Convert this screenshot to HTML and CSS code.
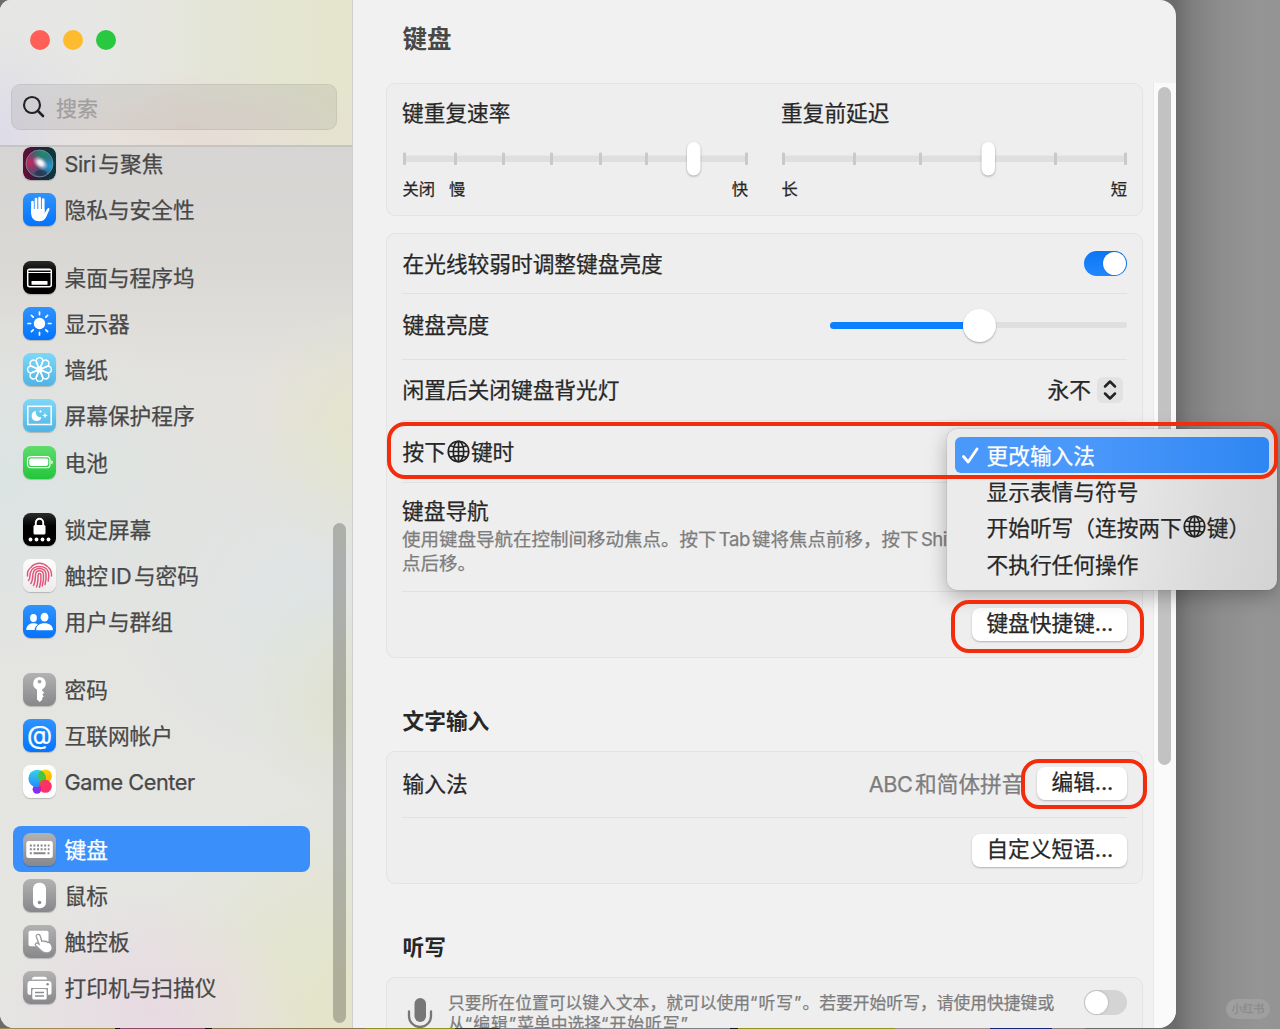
FILE: index.html
```
<!DOCTYPE html>
<html lang="zh-CN">
<head>
    <meta charset="utf-8">
    <title>键盘</title>
    <link rel="stylesheet" href="styles.css">
</head>
<body>
<div class="screen">
    <div class="window">
        <div class="sidebar">
            <div class="sidebar-top">
                <div class="lights">
                    <span class="light red"></span>
                    <span class="light yellow"></span>
                    <span class="light green"></span>
                </div>
                <div class="search">
                    <svg width="24" height="24" viewBox="0 0 24 24" fill="none" stroke="#222" stroke-width="2.1" stroke-linecap="round"><circle cx="10" cy="10" r="8"/><path d="M16 16l5 5" stroke-width="2.6"/></svg>
                    <span>搜索</span>
                </div>
            </div>

            <div class="list">
                <div class="group">
                    <div class="item">
                        <svg class="icon" viewBox="0 0 33 33">
                            <defs>
                                <linearGradient id="siriBg" x1="0" x2="1"><stop offset="0" stop-color="#6d0b35"/><stop offset=".45" stop-color="#26203c"/><stop offset="1" stop-color="#073c3e"/></linearGradient>
                                <radialGradient id="siriPink" cx=".15" cy=".45" r=".5"><stop offset="0" stop-color="#c8285f"/><stop offset="1" stop-color="#c8285f" stop-opacity="0"/></radialGradient>
                                <radialGradient id="siriGreen" cx=".65" cy=".1" r=".5"><stop offset="0" stop-color="#1f8f6c"/><stop offset="1" stop-color="#1f8f6c" stop-opacity="0"/></radialGradient>
                                <radialGradient id="siriCyan" cx=".9" cy=".6" r=".45"><stop offset="0" stop-color="#1e9bd8"/><stop offset="1" stop-color="#1e9bd8" stop-opacity="0"/></radialGradient>
                                <radialGradient id="siriGlow"><stop offset="0" stop-color="#fff"/><stop offset=".35" stop-color="#fff" stop-opacity=".85"/><stop offset="1" stop-color="#cbb9e8" stop-opacity="0"/></radialGradient>
                            </defs>
                            <rect width="33" height="33" rx="7.5" fill="url(#siriBg)"/>
                            <circle cx="16.5" cy="16.5" r="13.5" fill="#3c5070"/>
                            <circle cx="16.5" cy="16.5" r="13.5" fill="url(#siriPink)"/>
                            <circle cx="16.5" cy="16.5" r="13.5" fill="url(#siriGreen)"/>
                            <circle cx="16.5" cy="16.5" r="13.5" fill="url(#siriCyan)"/>
                            <ellipse cx="18" cy="26" rx="6" ry="3" fill="#132438" opacity=".5"/>
                            <ellipse cx="17.5" cy="16" rx="9" ry="6" fill="url(#siriGlow)" transform="rotate(38 17.5 16)"/>
                            <circle cx="16.5" cy="16.5" r="13.5" fill="none" stroke="#8fa5a9" stroke-width=".8" opacity=".8"/>
                        </svg>
                        <span><span class="latin">Siri</span>与聚焦</span>
                    </div>
                    <div class="item">
                        <svg class="icon blue" viewBox="0 0 33 33">
                            <path d="M9.5 9v11M13 6v12M16.6 5v12M20.2 6.5V18" stroke="#fff" stroke-width="2.7" stroke-linecap="round" fill="none"/>
                            <path d="M8.200 16h13.400v4.200l2.700-4.400c.9-1.300 2.600-.6 2.100 1L23.200 24c-1.200 2.800-3.700 4.200-7 4.200-5 0-8-3.200-8-8z" fill="#fff"/>
                        </svg>
                        <span>隐私与安全性</span>
                    </div>
                </div>

                <div class="group">
                    <div class="item">
                        <svg class="icon black" viewBox="0 0 33 33">
                            <rect x="4.700" y="8.200" width="23.600" height="17.600" rx="2" fill="none" stroke="#fff" stroke-width="1.500"/>
                            <path d="M5.500 9.500h22" stroke="#888" stroke-width="1"/><path d="M5 11.500h23" stroke="#fff" stroke-width="1.100"/>
                            <rect x="8.500" y="20" width="16" height="3.800" rx=".5" fill="#fff"/>
                        </svg>
                        <span>桌面与程序坞</span>
                    </div>
                    <div class="item">
                        <svg class="icon blue" viewBox="0 0 33 33">
                            <circle cx="16.500" cy="16.500" r="5.700" fill="#fff"/>
                            <path d="M16.500 5v2.600M16.500 25.400V28M5 16.500h2.600M25.400 16.500H28M8.400 8.400l1.800 1.800M22.800 22.800l1.800 1.800M8.400 24.600l1.800-1.800M22.800 10.200l1.800-1.800" stroke="#fff" stroke-width="1.700" stroke-linecap="round"/>
                        </svg>
                        <span>显示器</span>
                    </div>
                    <div class="item">
                        <svg class="icon sky" viewBox="0 0 33 33">
                            <g fill="none" stroke="#fff" stroke-width="1.400">
                                <g id="petals">
                                    <path id="petal" d="M16.500 16.500L13.300 9.500A3.500 3.500 0 1 1 19.700 9.500z"/>
                                    <use href="#petal" transform="rotate(90 16.500 16.500)"/>
                                    <use href="#petal" transform="rotate(180 16.500 16.500)"/>
                                    <use href="#petal" transform="rotate(270 16.500 16.500)"/>
                                </g>
                                <use href="#petals" transform="rotate(45 16.500 16.500)"/>
                                <circle cx="16.500" cy="16.500" r="2.500"/>
                            </g>
                        </svg>
                        <span>墙纸</span>
                    </div>
                    <div class="item">
                        <svg class="icon sky" viewBox="0 0 33 33">
                            <rect x="4.800" y="7.300" width="23.400" height="18.200" fill="none" stroke="#fff" stroke-width="1.500"/>
                            <path d="M13 12a5 5 0 1 0 5.500 6.200A4.800 4.800 0 0 1 13 12z" fill="#fff"/>
                            <path d="M22 13.500l.8 2.200 2.200.8-2.200.8-.8 2.200-.8-2.200-2.200-.8 2.200-.8zM17.500 10.500l.5 1.400 1.400.5-1.400.5-.5 1.400-.5-1.400-1.400-.5 1.400-.5z" fill="#fff"/>
                        </svg>
                        <span>屏幕保护程序</span>
                    </div>
                    <div class="item">
                        <svg class="icon lime" viewBox="0 0 33 33">
                            <rect x="4.500" y="10.700" width="22.500" height="11" rx="3.300" fill="none" stroke="#fff" stroke-width="1.200"/>
                            <rect x="6.300" y="12.500" width="18.900" height="7.400" rx="1.800" fill="#fff"/>
                            <path d="M28.300 14.300c2 .8 2 3.200 0 4z" fill="#fff"/>
                        </svg>
                        <span>电池</span>
                    </div>
                </div>

                <div class="group">
                    <div class="item">
                        <svg class="icon black" viewBox="0 0 33 33">
                            <rect x="10.500" y="12" width="12" height="9.500" rx="1.500" fill="#fff"/>
                            <path d="M12.800 13V9.500a3.700 3.700 0 0 1 7.400 0V13" fill="none" stroke="#fff" stroke-width="1.900"/>
                            <g fill="#fff"><circle cx="7.500" cy="26.500" r="1.900"/><circle cx="13.500" cy="26.500" r="1.900"/><circle cx="19.500" cy="26.500" r="1.900"/><circle cx="25.500" cy="26.500" r="1.900"/></g>
                        </svg>
                        <span>锁定屏幕</span>
                    </div>
                    <div class="item">
                        <svg class="icon paper" viewBox="0 0 33 33">
                            <g fill="none" stroke="#e0577b" stroke-width="1.500" stroke-linecap="round">
                                <path d="M8.500 7.500C13 3 20 3 24.500 7.500"/>
                                <path d="M4.500 17c-.5-4 1-7 4-9M28.500 17c.3-4-1.200-6.800-3-8.500"/>
                                <path d="M5.500 21.500c2-2 1-5 2-8C10 5.500 23 5.500 25.500 13.500c.6 2.500.4 5-.3 8.500"/>
                                <path d="M7.800 24.500c2-2.500 1.700-6 2.200-9.500 1-7.500 12-7.500 13 0 .4 4 0 7-1 10.500"/>
                                <path d="M10.500 26.500c2-3.500 1.700-7 2-11 .7-5 7.300-5 8 0 .4 4-.1 7.700-1.300 11.500"/>
                                <path d="M13.500 28c1.500-3.500 1.500-7.500 1.600-11.700.3-2.300 2.600-2.300 2.900 0 .2 4.200-.1 7.700-1.500 12"/>
                            </g>
                        </svg>
                        <span>触控<span class="latin">ID</span>与密码</span>
                    </div>
                    <div class="item">
                        <svg class="icon blue" viewBox="0 0 33 33">
                            <g fill="#fff">
                                <ellipse cx="10.500" cy="13" rx="3.400" ry="3.900"/>
                                <path d="M3.300 25c0-4.200 3-6.700 7.200-6.700 1.800 0 3.200.4 4.300 1.200-2 1.500-3 3.300-3.200 5.500z"/>
                                <ellipse cx="21.500" cy="12.200" rx="3.900" ry="4.400"/>
                                <path d="M13.200 25.300c-.4-4.700 3.500-7 8.300-7s8.700 2.300 8.300 7z"/>
                            </g>
                        </svg>
                        <span>用户与群组</span>
                    </div>
                </div>

                <div class="group">
                    <div class="item">
                        <svg class="icon gray" viewBox="0 0 33 33">
                            <path fill="#fff" fill-rule="evenodd" d="M16.500 4a6.500 6.500 0 0 1 2.700 12.300v1.500l2 1.900-1.900 1.900 1.500 1.800-1.600 1.700v1.700L16.700 29 14 26.500V16.400A6.500 6.500 0 0 1 16.500 4zm0 2.700a1.900 1.900 0 1 0 0 3.800 1.900 1.900 0 0 0 0-3.800z"/>
                        </svg>
                        <span>密码</span>
                    </div>
                    <div class="item">
                        <span class="icon blue at">@</span>
                        <span>互联网帐户</span>
                    </div>
                    <div class="item">
                        <svg class="icon white" viewBox="0 0 33 33">
                            <defs>
                                <linearGradient id="gcBlue" x1="0" y1="0" x2="0" y2="1"><stop offset="0" stop-color="#34d4e8"/><stop offset="1" stop-color="#2b86ff"/></linearGradient>
                                <linearGradient id="gcWarm" x1="0" y1="0" x2="1" y2="1"><stop offset="0" stop-color="#ffe000"/><stop offset="1" stop-color="#ffa800"/></linearGradient>
                            </defs>
                            <circle cx="22.300" cy="11" r="6.600" fill="url(#gcWarm)"/>
                            <circle cx="14" cy="24.300" r="4.400" fill="#8b2cf5"/>
                            <circle cx="14.200" cy="13.500" r="8.800" fill="url(#gcBlue)"/>
                            <path d="M22.800 15.400a8.800 8.800 0 0 0-4.700-9.800 6.600 6.600 0 0 0 4.700 12z" fill="#4bc43c"/>
                            <circle cx="22.300" cy="21.300" r="6.500" fill="#ff2f68"/>
                            <path d="M16 19.500a6.500 6.500 0 0 1 5.800-4.700c-.6 3-2.600 5.400-5.800 6.800z" fill="#d1563f"/>
                            <path d="M16 20.500c-.2 2 .5 4 2 5.600a4.400 4.400 0 0 0-2-5.600z" fill="#cb1fa8"/>
                        </svg>
                        <span class="latin">Game Center</span>
                    </div>
                </div>

                <div class="group">
                    <div class="item selected">
                        <svg class="icon gray" viewBox="0 0 33 33">
                            <rect x="3.300" y="8" width="26.500" height="17" rx="2.500" fill="#fff"/>
                            <g stroke="#888" stroke-width="2" stroke-dasharray="2 1.600"><path d="M6.800 12.500H26.500M6.800 16.300H26.500"/></g>
                            <path d="M6.800 20.200h2M10.500 20.200h12M24.500 20.200h2" stroke="#888" stroke-width="2"/>
                        </svg>
                        <span>键盘</span>
                    </div>
                    <div class="item">
                        <svg class="icon gray" viewBox="0 0 33 33">
                            <rect x="10" y="3.800" width="13" height="25.500" rx="5.800" fill="#fff"/>
                            <circle cx="16.500" cy="23.500" r="1.800" fill="#8d8d91"/>
                        </svg>
                        <span>鼠标</span>
                    </div>
                    <div class="item">
                        <svg class="icon gray" viewBox="0 0 33 33">
                            <rect x="5.500" y="5.800" width="20" height="15.500" rx="1.800" fill="#fff"/>
                            <path d="M14.300 9.500c1.500-.5 2.600.2 3 1.700l1.500 5c1-.7 2.300-.4 2.800.4 1-.5 2.300-.2 2.800.8 2-.6 3.600.8 4.400 3.300.9 3.300.6 5.500-2.600 6.600-3.700 1.300-6.500.4-8.800-2.300l-4.700-4.600c-1.300-1.500.6-3.200 2.300-2l1 .6-2.700-7.300c-.3-1 .1-1.900 1-2.200z" fill="#fff" stroke="#9a9a9d" stroke-width="1.300"/>
                        </svg>
                        <span>触控板</span>
                    </div>
                    <div class="item">
                        <svg class="icon gray" viewBox="0 0 33 33">
                            <path d="M9 8.500c0-1.700 1-2.700 2.700-2.700h9.600c1.700 0 2.700 1 2.700 2.700z" fill="#fff"/>
                            <path d="M7.500 10h18c2 0 3 1 3 3v8.500c0 1.500-.8 2.300-2.300 2.300H25V17H8v6.800H6.800c-1.500 0-2.300-.8-2.300-2.300V13c0-2 1-3 3-3z" fill="#fff"/>
                            <circle cx="24.600" cy="13.300" r="1.200" fill="#8d8d91"/>
                            <rect x="9.300" y="18" width="14.400" height="10.500" rx="1.500" fill="#fff"/>
                            <path d="M12 21.500h9M12 25h9" stroke="#8d8d91" stroke-width="1.300"/>
                        </svg>
                        <span>打印机与扫描仪</span>
                    </div>
                </div>
            </div>
            <div class="side-thumb"></div>
        </div>

        <div class="main">
            <h1>键盘</h1>

            <div class="content">
                <div class="panel rates">
                    <div class="rate">
                        <p>键重复速率</p>
                        <svg width="345" height="38" viewBox="0 0 345 38">
                            <rect x="1" y="15.500" width="343" height="6.500" fill="#dfdfdf"/>
                            <g fill="#c9c9c9">
                                <rect x="0" y="12.500" width="3" height="12.500" rx="1"/>
                                <rect x="51" y="12.500" width="3" height="12.500" rx="1"/>
                                <rect x="99" y="12.500" width="3" height="12.500" rx="1"/>
                                <rect x="147" y="12.500" width="3" height="12.500" rx="1"/>
                                <rect x="196" y="12.500" width="3" height="12.500" rx="1"/>
                                <rect x="242" y="12.500" width="3" height="12.500" rx="1"/>
                                <rect x="342" y="12.500" width="3" height="12.500" rx="1"/>
                            </g>
                            <rect class="knob" x="284" y="2" width="13.500" height="33.500" rx="6.700"/>
                        </svg>
                        <div class="labels"><span class="off">关闭</span><span>慢</span><span class="last">快</span></div>
                    </div>
                    <div class="rate">
                        <p>重复前延迟</p>
                        <svg width="345" height="38" viewBox="0 0 345 38">
                            <rect x="1" y="15.500" width="343" height="6.500" fill="#dfdfdf"/>
                            <g fill="#c9c9c9">
                                <rect x="0" y="12.500" width="3" height="12.500" rx="1"/>
                                <rect x="71" y="12.500" width="3" height="12.500" rx="1"/>
                                <rect x="137" y="12.500" width="3" height="12.500" rx="1"/>
                                <rect x="272" y="12.500" width="3" height="12.500" rx="1"/>
                                <rect x="342" y="12.500" width="3" height="12.500" rx="1"/>
                            </g>
                            <rect class="knob" x="199.500" y="2" width="13.500" height="33.500" rx="6.700"/>
                        </svg>
                        <div class="labels"><span>长</span><span class="last">短</span></div>
                    </div>
                </div>

                <div class="panel">
                    <div class="row auto">
                        <span>在光线较弱时调整键盘亮度</span>
                        <span class="switch on"></span>
                    </div>
                    <div class="row bright">
                        <span>键盘亮度</span>
                        <div class="slider"><div class="fill"></div><div class="ball"></div></div>
                    </div>
                    <div class="row idle">
                        <span>闲置后关闭键盘背光灯</span>
                        <div class="select">
                            <span>永不</span>
                            <svg width="26" height="26" viewBox="0 0 26 26"><rect width="26" height="26" rx="6" fill="#e2e2e2"/><path d="M8 9.500l5-5 5 5M8 16.500l5 5 5-5" fill="none" stroke="#222" stroke-width="2.500" stroke-linecap="round" stroke-linejoin="round"/></svg>
                        </div>
                    </div>
                    <div class="row press">
                        <span>按下<svg class="globe" viewBox="0 0 22 22"><circle cx="11" cy="11" r="9.800"/><ellipse cx="11" cy="11" rx="5" ry="9.800"/><path d="M11 1v20M1 11h20M3 5.500c5 2 11 2 16 0M3 16.500c5-2 11-2 16 0"/></svg>键时</span>
                    </div>
                    <div class="row nav">
                        <p>键盘导航</p>
                        <p class="desc">使用键盘导航在控制间移动焦点。按下<span class="latin">Tab</span>键将焦点前移，按下<span class="latin">Shift Tab</span>键将焦<br>点后移。</p>
                    </div>
                    <div class="row shortcuts">
                        <button>键盘快捷键<span class="dots">...</span></button>
                    </div>
                </div>

                <h2>文字输入</h2>
                <div class="panel">
                    <div class="row method">
                        <span>输入法</span>
                        <span class="value"><span class="latin">ABC</span>和简体拼音</span>
                        <button>编辑<span class="dots">...</span></button>
                    </div>
                    <div class="row phrases">
                        <button>自定义短语<span class="dots">...</span></button>
                    </div>
                </div>

                <h2>听写</h2>
                <div class="panel dictation">
                    <svg width="26" height="44" viewBox="0 0 26 44"><rect x="7.500" y="1" width="11.500" height="24" rx="5.700" fill="#777"/><path d="M2 14.500v4.500a11 11 0 0 0 22 0v-4.500M13 30v6" fill="none" stroke="#777" stroke-width="2.300" stroke-linecap="round"/></svg>
                    <p>只要所在位置可以键入文本，就可以使用<span class="quote">“听写”</span>。若要开始听写，请使用快捷键或<br>从<span class="quote">“编辑”</span>菜单中选择<span class="quote">“开始听写”</span></p>
                    <span class="switch"></span>
                </div>
            </div>
        </div>
        <div class="scroll"><div class="thumb"></div></div>
    </div>

    <div class="menu">
        <div class="option active"><svg width="17" height="17" viewBox="0 0 17 17"><path d="M1.500 9.500l4.700 5.500L15 2" fill="none" stroke="#fff" stroke-width="2.800" stroke-linecap="round" stroke-linejoin="round"/></svg>更改输入法</div>
        <div class="option">显示表情与符号</div>
        <div class="option">开始听写（连按两下<svg class="globe" viewBox="0 0 22 22"><circle cx="11" cy="11" r="9.800"/><ellipse cx="11" cy="11" rx="5" ry="9.800"/><path d="M11 1v20M1 11h20M3 5.500c5 2 11 2 16 0M3 16.500c5-2 11-2 16 0"/></svg>键）</div>
        <div class="option">不执行任何操作</div>
    </div>

    <div class="mark mark-press"></div>
    <div class="mark mark-shortcuts"></div>
    <div class="mark mark-edit"></div>
    <div class="watermark">小红书</div>
</div>
</body>
</html>
```

FILE: styles.css
```
*{
    margin: 0;
    padding: 0;
    box-sizing: border-box;
}
body{
    font-family: Inter, "Noto Sans CJK SC", sans-serif;
    font-size: 21.7px;
    color: #272727;
    text-autospace: normal;
    -webkit-text-stroke: .25px;
}
.screen{
    position: relative;
    width: 1280px;
    height: 1029px;
    overflow: hidden;
    background:
        linear-gradient(90deg, #a08d55 0 115px, #111 115px 120px, #8c4a68 120px 205px, #111 205px 212px, #8a7650 212px 365px, #8e9320 365px 455px, #3a3320 455px 500px, #85808a 500px 730px, #151515 730px 738px, #8e9320 738px 895px, #9f8f8c 895px 990px, #16267c 990px 1052px, #8b8383 1052px 1085px, transparent 1085px) 0 1028px / 1280px 1px no-repeat,
        linear-gradient(90deg, #6c6c6c 1176px, #7f7f7f 1192px, #8d8d8d 1220px, #959595 1260px, #939393);
}
.window{
    display: flex;
    width: 1176px;
    height: 1028px;
    border-radius: 11px 16px 18px 14px;
    overflow: hidden;
    background: #f1f1f1;
}

/* sidebar */
.sidebar{
    position: relative;
    width: 353px;
    border-right: 1px solid #cfcfcb;
    color: #484848;
    background:
        radial-gradient(circle at 370px 430px, #e3e4cb 0, transparent 130px),
        radial-gradient(circle at 350px 700px, #dfe2ce 0, transparent 110px),
        radial-gradient(ellipse 150px 120px at 150px 1010px, #e8dae2 0, transparent 100%),
        radial-gradient(circle at 350px 1010px, #e3e4c9 30px, transparent 220px),
        radial-gradient(ellipse 240px 180px at 0 480px, #dbe4e3 0, transparent 100%),
        radial-gradient(circle at 290px 600px, #dfe4e4 0, transparent 170px),
        linear-gradient(#d6d5d3 146px, #dad8d5 260px, #e3e1dd 370px, #e4e4e1 620px, #e5e5e2 1028px);
}
.sidebar-top{
    height: 147px;
    padding: 30px 15px 0 11px;
    border-bottom: 2px solid #c6c4c0;
    background:
        radial-gradient(ellipse 190px 60px at 190px 130px, #e7dcd6 0, transparent 100%),
        radial-gradient(circle at 0 140px, #dddbe8 0, transparent 110px),
        linear-gradient(90deg, #e6e6e4 100px, #e4e5d7 220px, #e5e5ce 330px);
}
.lights{
    display: flex;
    gap: 13px;
    padding-left: 18.5px;
}
.light{
    width: 20px;
    height: 20px;
    border-radius: 50%;
}
.red{
    background: #ff5f57;
}
.yellow{
    background: #febb2e;
}
.green{
    background: #28c840;
}
.search{
    display: flex;
    align-items: center;
    gap: 11px;
    width: 326px;
    height: 46px;
    margin-top: 34px;
    padding-left: 10px;
    border: 1px solid rgba(0,0,0,.06);
    border-radius: 9px;
    background: rgba(0,0,0,.07);
    font-size: 21px;
    color: #a09e9e;
}
.search span{
    margin-left: -1px;
}
.list{
    margin-top: -6.5px;
    padding-left: 13px;
    position: relative;
}
.group{
    margin-bottom: 21.3px;
}
.item{
    display: flex;
    align-items: center;
    gap: 8.5px;
    width: 297px;
    height: 46.2px;
    padding-left: 10px;
    border-radius: 8px;
    white-space: nowrap;
}
.item > span:last-child{
    padding-bottom: 2px;
}
.item > .latin:last-child{
    padding-bottom: 0;
}
.latin{
    letter-spacing: -.45px;
}
.selected{
    background: #3a8ffb;
    color: #fff;
}
.icon{
    flex: none;
    width: 33px;
    height: 33px;
    border-radius: 7.5px;
    box-shadow: 0 1px 1px rgba(0,0,0,.2);
}
.blue{
    background: linear-gradient(#2f93ff, #0474fb);
}
.black{
    background: linear-gradient(#2b2b2b, #000 40%);
}
.sky{
    background: linear-gradient(#7dd8f8, #4fb4e6);
}
.lime{
    background: linear-gradient(#5fdc6b, #22c63b);
}
.paper{
    background: linear-gradient(#fdfdfd, #ececec);
}
.gray{
    background: linear-gradient(#b2b2b3, #88888c);
}
.white{
    background: #fff;
}
.at{
    color: #fff;
    font-size: 26px;
    line-height: 31px;
    text-align: center;
}
.side-thumb{
    position: absolute;
    right: 6px;
    top: 523px;
    width: 13px;
    height: 500px;
    border-radius: 7px;
    background: rgba(0,0,0,.23);
}

/* right side */
.main{
    width: 800px;
}
h1{
    height: 83px;
    padding-left: 49.5px;
    font-size: 24.5px;
    line-height: 79px;
    color: #484848;
    -webkit-text-stroke: 0;
}
.content{
    padding: 0 10px 0 33px;
}
.panel{
    padding: 0 15px;
    border: 1px solid #e3e3e3;
    border-radius: 9px;
    background: #eee;
}
.rates{
    display: flex;
    gap: 33px;
    height: 133px;
    margin-bottom: 17px;
    padding: 13px 15px 0;
}
.rate{
    width: 346px;
}
.rate p{
    line-height: 32px;
}
.rate svg{
    display: block;
    margin: 11px 0 0 1px;
}
.knob{
    fill: #fff;
    filter: drop-shadow(0 1px 1px rgba(0,0,0,.3));
}
.labels{
    display: flex;
    margin-top: -1px;
    padding-left: .5px;
    font-size: 16.3px;
    line-height: 24px;
}
.off{
    margin-right: 14px;
}
.last{
    margin-left: auto;
}
.row{
    display: flex;
    align-items: center;
    justify-content: space-between;
    border-bottom: 1px solid #e1e1e1;
}
.row > span:first-child{
    padding: 0 0 3px .5px;
}
.row:last-child{
    border-bottom: 0;
}
.auto{
    height: 60px;
}
.bright{
    height: 66px;
    padding-bottom: 3px;
}
.idle{
    height: 61px;
}
.press{
    height: 62px;
}
.nav{
    display: block;
    height: 109px;
    padding-top: 12px;
    line-height: 32px;
    white-space: nowrap;
    overflow: hidden;
}
.desc{
    font-size: 18.5px;
    line-height: 24px;
    color: #7d7d7d;
}
.shortcuts{
    height: 65px;
    justify-content: flex-end;
}
.switch{
    flex: none;
    display: flex;
    width: 43px;
    height: 25px;
    padding: 1px;
    border-radius: 13px;
    background: #d4d4d4;
}
.switch::after{
    content: "";
    width: 23px;
    height: 23px;
    border-radius: 50%;
    background: #fff;
    box-shadow: 0 0 2px rgba(0,0,0,.3);
}
.on{
    justify-content: flex-end;
    background: linear-gradient(#0a76f5, #2388ff);
}
.slider{
    display: flex;
    align-items: center;
    width: 297px;
    height: 6px;
    border-radius: 3px;
    background: #dfdfdf;
}
.fill{
    width: 133px;
    height: 7px;
    border-radius: 4px 0 0 4px;
    background: #0a7fff;
}
.ball{
    width: 33px;
    height: 33px;
    border-radius: 50%;
    background: #fff;
    box-shadow: 0 1px 2px rgba(0,0,0,.3);
}
.select{
    display: flex;
    align-items: center;
    gap: 6px;
    margin-right: 4px;
}
.select span{
    padding-bottom: 3px;
}
.globe{
    width: 23px;
    height: 23px;
    margin: 0 1px;
    vertical-align: -3px;
    fill: none;
    stroke: #222;
    stroke-width: 1.6;
}
button{
    height: 33px;
    padding: 0 14px 3px;
    border: 0;
    border-radius: 8px;
    background: #fff;
    box-shadow: 0 1px 2px rgba(0,0,0,.25);
    font: inherit;
    line-height: 30px;
    color: #272727;
    text-autospace: no-autospace;
    -webkit-text-stroke: .25px;
}
.dots{
    letter-spacing: -.2px;
}
h2{
    height: 93px;
    padding: 47px 0 0 16.5px;
    font-size: 21.7px;
    line-height: 32px;
    -webkit-text-stroke: 0;
}
.method{
    height: 66px;
    padding-bottom: 2px;
}
.value{
    margin-left: auto;
    margin-right: 14px;
    padding-bottom: 2px;
    color: #7d7d7d;
}
.phrases{
    height: 65px;
    justify-content: flex-end;
}
.dictation{
    display: flex;
    align-items: flex-start;
    height: 90px;
    padding: 12px 15px 0 20px;
}
.dictation svg{
    flex: none;
    margin-top: 7px;
}
.dictation p{
    width: 612px;
    margin: 3px 24px 0 15px;
    font-size: 16.8px;
    line-height: 21px;
    white-space: nowrap;
    color: #7d7d7d;
}
.quote{
    letter-spacing: 1px;
}
.scroll{
    width: 23px;
    margin-top: 83px;
    padding: 4px 0 0 4px;
    border-left: 1px solid #e9e9e9;
    background: #fafafa;
}
.thumb{
    width: 13px;
    height: 678px;
    border-radius: 7px;
    background: #c2c2c2;
}

/* popup menu */
.menu{
    position: absolute;
    left: 947px;
    top: 429px;
    width: 330px;
    height: 161px;
    padding: 8px;
    border-radius: 10px;
    background: linear-gradient(100deg, #ebebeb 45%, #dadada 80%, #d3d3d3);
    box-shadow: 0 0 1px rgba(0,0,0,.5), 0 6px 20px rgba(0,0,0,.28);
}
.option{
    display: flex;
    align-items: center;
    height: 36.4px;
    padding: 0 0 2px 31.5px;
    border-radius: 6px;
    white-space: nowrap;
}
.active{
    padding-left: 7px;
    background: linear-gradient(90deg, #4b98fb 40%, #2f86f2);
    color: #fff;
}
.active svg{
    margin-right: 7.5px;
    margin-top: 2px;
}

/* red outlines */
.mark{
    position: absolute;
    border: 4px solid #f22d0d;
    border-radius: 18px;
}
.mark-press{
    left: 387px;
    top: 422px;
    width: 891px;
    height: 57px;
}
.mark-shortcuts{
    left: 951px;
    top: 600px;
    width: 193px;
    height: 53px;
}
.mark-edit{
    left: 1021px;
    top: 759px;
    width: 126px;
    height: 50px;
}
.watermark{
    position: absolute;
    left: 1226px;
    top: 999px;
    width: 44px;
    height: 20px;
    border-radius: 10px;
    background: #9f9f9f;
    color: #8b8b8b;
    font-size: 11px;
    line-height: 20px;
    text-align: center;
}
```
